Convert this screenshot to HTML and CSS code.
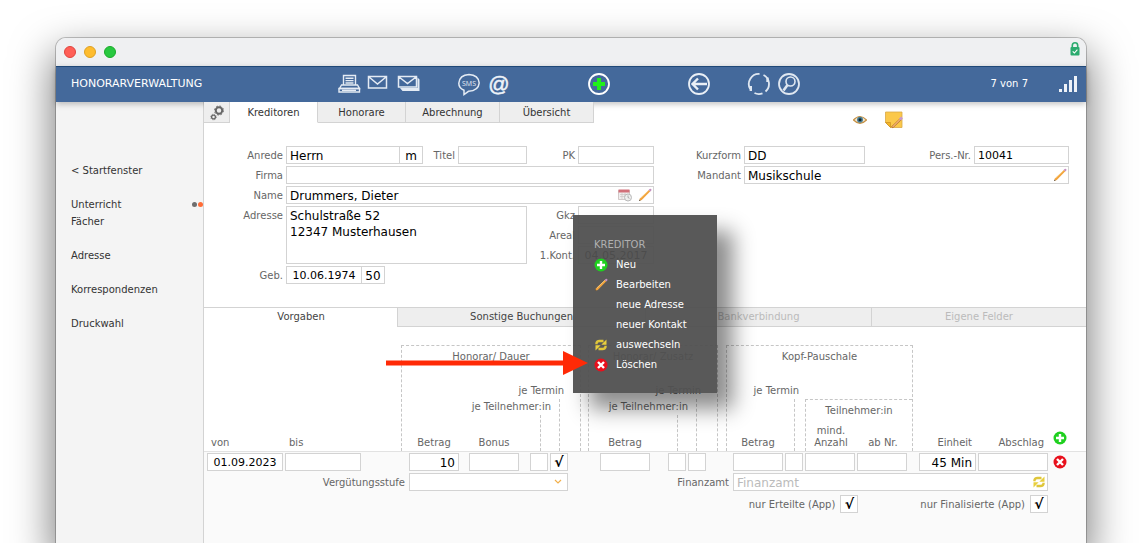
FILE: index.html
```html
<!DOCTYPE html>
<html lang="de">
<head>
    <meta charset="UTF-8">
    <meta name="viewport" content="width=device-width, initial-scale=1.0">
    <title>Honorarverwaltung</title>
    <link rel="stylesheet" href="styles.css">
</head>
<body>

<!-- Shared icons -->
<svg class="sprite" aria-hidden="true">
    <symbol id="icon-add" viewBox="0 0 14 14">
        <circle cx="7" cy="7" r="6.5" fill="#1fd01f"/>
        <path d="M7 3v8M3 7h8" stroke="#fff" stroke-width="2.4"/>
    </symbol>
    <symbol id="icon-delete" viewBox="0 0 14 14">
        <circle cx="7" cy="7" r="6.5" fill="#e8101c"/>
        <path d="M4 4l6 6M10 4l-6 6" stroke="#fff" stroke-width="2.4"/>
    </symbol>
    <symbol id="icon-pencil" viewBox="0 0 14 14">
        <path d="M1 13l1.2-2.8L10.9 1.900l1.400 1.400L3.800 12z" fill="#f2a33c"/>
        <path d="M2.800 10L11 2.200" stroke="#f9cd80" stroke-width=".8"/>
        <path d="M10.600 2l1-1.100q.8-.5 1.500.2t.2 1.500l-1 1z" fill="#c58fc0"/>
        <path d="M1 13l.6-1.600 1 1z" fill="#444"/>
    </symbol>
    <symbol id="icon-swap" viewBox="0 0 14 14">
        <path d="M2.500 6.200V5Q3 3 5.500 3h4" fill="none" stroke="#dfc63a" stroke-width="2.400"/>
        <path d="M12.500 1.500v5.200H7.300z" fill="#e8cf3e"/>
        <path d="M11.500 7.800V9Q11 11 8.500 11h-4" fill="none" stroke="#dfc63a" stroke-width="2.400"/>
        <path d="M1.500 12.500V7.300h5.200z" fill="#e8cf3e"/>
    </symbol>
</svg>

<div class="window">
    <div class="titlebar">
        <span class="dot dot-red"></span>
        <span class="dot dot-yellow"></span>
        <span class="dot dot-green"></span>
        <svg class="lock" width="10" height="14" viewBox="0 0 10 14">
            <path d="M2.300 6V3.500a2.700 2.700 0 0 1 5.400 0V6" fill="none" stroke="#2bab6f" stroke-width="1.600"/>
            <rect x="0.500" y="5" width="9" height="8.500" rx="1" fill="#2bab6f"/>
            <path d="M2.700 9.300l1.700 1.700 3-3.300" fill="none" stroke="#fff" stroke-width="1.100"/>
        </svg>
    </div>

    <header class="header">
        <h1 class="app-title">HONORARVERWALTUNG</h1>
        <div class="tools">
            <button type="button" class="tool" aria-label="Drucken">
                <svg width="24" height="24" viewBox="0 0 24 24" fill="none" stroke="#e4ebf4" stroke-width="1.400">
                    <path d="M6.500 13V3.500h12V13M8.500 6.200h8M8.500 8.600h8M8.500 11h8M4.500 13l-2 3.500h20L20.500 13z"/>
                    <path d="M2 16.500h20.500V20H2z"/>
                    <path d="M5 18.300h14"/>
                </svg>
            </button>
            <button type="button" class="tool" aria-label="E-Mail">
                <svg width="24" height="24" viewBox="0 0 24 24" fill="none" stroke="#e4ebf4" stroke-width="1.500">
                    <path d="M1.500 4.500h18V16h-18zM2 5l8.500 7L19 5"/>
                </svg>
            </button>
            <button type="button" class="tool" aria-label="Serien-E-Mail">
                <svg width="24" height="24" viewBox="0 0 24 24" fill="none" stroke="#e4ebf4" stroke-width="1.500">
                    <path d="M1.500 4.500h18V15h-18zM2 5l8.500 6.500L19 5"/>
                    <path d="M3 16h17.500V5.500l2 2V19H5.500z" fill="#e4ebf4" stroke="none"/>
                </svg>
            </button>
        </div>
        <div class="tools tools-near">
            <button type="button" class="tool" aria-label="SMS">
                <svg width="24" height="24" viewBox="0 0 24 24" fill="none" stroke="#e4ebf4" stroke-width="1.500">
                    <path d="M7 18.200Q1.800 16 1.800 11.200 2.500 3 12 2.500 21.500 3 22.200 11 21.500 18.800 11.500 19.300L7 22.500z"/>
                    <text x="12" y="13.500" class="sms-text">SMS</text>
                </svg>
            </button>
            <button type="button" class="tool" aria-label="Adresse">
                <svg width="24" height="24" viewBox="0 0 24 24"><text x="12" y="18.500" class="at-text">@</text></svg>
            </button>
        </div>
        <div class="tools tools-far">
            <button type="button" class="tool" aria-label="Neu">
                <svg width="24" height="24" viewBox="0 0 24 24">
                    <circle cx="12" cy="12" r="10" fill="none" stroke="#fff" stroke-width="1.800"/>
                    <path d="M12 6v12M6 12h12" stroke="#1ff01a" stroke-width="4"/>
                </svg>
            </button>
        </div>
        <div class="tools tools-far">
            <button type="button" class="tool" aria-label="Zurück">
                <svg width="24" height="24" viewBox="0 0 24 24" fill="none" stroke="#e9eff6">
                    <circle cx="12" cy="12" r="10" stroke-width="1.800"/>
                    <path d="M20 12H6M11 6.500L5.500 12l5.500 5.500" stroke-width="2.400"/>
                </svg>
            </button>
        </div>
        <div class="tools tools-near">
            <button type="button" class="tool" aria-label="Aktualisieren">
                <svg width="24" height="24" viewBox="0 0 24 24" fill="none" stroke="#dfe7f1" stroke-width="1.800">
                    <path d="M16.500 3A10 10 0 0 1 18.500 19.500M15.500 21.300A10 10 0 0 1 7.500 21M3.200 17A10 10 0 0 1 12.500 2"/>
                    <path d="M20.500 5.500v4.500M3.800 14v5" stroke-width="2.400"/>
                </svg>
            </button>
            <button type="button" class="tool" aria-label="Suchen">
                <svg width="24" height="24" viewBox="0 0 24 24" fill="none" stroke="#dfe7f1">
                    <circle cx="12" cy="12" r="10" stroke-width="1.800"/>
                    <circle cx="13.500" cy="9.500" r="4.500" stroke-width="1.600"/>
                    <path d="M10.500 13l-4 5.500" stroke-width="2.600"/>
                </svg>
            </button>
        </div>
        <span class="counter">7 von 7</span>
        <svg width="20" height="18" viewBox="0 0 20 18" fill="#eef2f8">
            <path d="M1 14h3v3H1zM6 9h3v8H6zM11 5h3v12h-3zM16 1h3v16h-3z"/>
        </svg>
    </header>

    <div class="content">
        <nav class="sidebar">
            <a href="#start">&lt; Startfenster</a>
            <div class="nav-group">
                <a href="#unterricht">Unterricht <span class="marks"><i class="mark"></i><i class="mark mark-orange"></i></span></a>
                <a href="#faecher">Fächer</a>
            </div>
            <a href="#adresse">Adresse</a>
            <a href="#korrespondenzen">Korrespondenzen</a>
            <a href="#druckwahl">Druckwahl</a>
        </nav>

        <main class="main">
            <div class="top-row">
                <div class="tabs">
                    <button type="button" class="tab tab-gear" aria-label="Einstellungen">
                        <svg width="16" height="16" viewBox="0 0 16 16" fill="none" stroke="#666">
                            <circle cx="10" cy="5.500" r="3.200" stroke-width="1.900"/>
                            <circle cx="10" cy="5.500" r="4.500" stroke-width="1" stroke-dasharray="1.800 1.730"/>
                            <circle cx="4.500" cy="12" r="1.900" stroke-width="1.300"/>
                            <circle cx="4.500" cy="12" r="2.800" stroke-width=".8" stroke-dasharray="1.100 1.100"/>
                        </svg>
                    </button>
                    <button type="button" class="tab tab-active">Kreditoren</button>
                    <button type="button" class="tab">Honorare</button>
                    <button type="button" class="tab tab-wide">Abrechnung</button>
                    <button type="button" class="tab tab-wide">Übersicht</button>
                </div>
                <div class="quick">
                    <button type="button" class="icon-button" aria-label="Ansicht">
                        <svg width="14" height="10" viewBox="0 0 14 10">
                            <path d="M.5 5Q7-2 13.500 5 7 11.500.5 5z" fill="#f0e7d4" stroke="#c69042" stroke-width="1.200"/>
                            <circle cx="7" cy="4.800" r="3" fill="#4b7f95"/>
                            <circle cx="7" cy="4.800" r="1.500" fill="#10242e"/>
                        </svg>
                    </button>
                    <button type="button" class="icon-button" aria-label="Notiz">
                        <svg width="18" height="18" viewBox="0 0 18 18">
                            <path d="M.5 1h16.500v15.500H5.500L.5 11.500z" fill="#fbc84a" stroke="#d9a847" stroke-width=".8"/>
                            <path d="M.5 11.500l5 5v-5z" fill="#f4b52b" stroke="#c58a1d" stroke-width=".6"/>
                            <path d="M7 16.500L15.800 8" stroke="#ad6a2a" stroke-width="2.400"/>
                            <path d="M7.500 16L15.600 8" stroke="#f2b070" stroke-width="1.400"/>
                            <path d="M15 8.500L17 6.500" stroke="#c69ad2" stroke-width="2.600"/>
                        </svg>
                    </button>
                </div>
            </div>

            <form class="person">
                <div class="person-left">
                    <label for="anrede">Anrede</label>
                    <div class="joined">
                        <input type="text" id="anrede" class="field field-salutation" value="Herrn">
                        <input type="text" class="field field-short" value="m" aria-label="Geschlecht">
                        <label for="titel" class="label-inner">Titel</label>
                        <input type="text" id="titel" class="field field-title">
                    </div>
                    <label for="pk">PK</label>
                    <input type="text" id="pk" class="field">

                    <label for="firma">Firma</label>
                    <input type="text" id="firma" class="field span-3">

                    <label for="name">Name</label>
                    <div class="field field-box span-3">
                        <input type="text" id="name" class="bare" value="Drummers, Dieter">
                        <button type="button" class="icon-button" aria-label="Termin">
                            <svg width="14" height="14" viewBox="0 0 14 14">
                                <path d="M.5 2.500h11v9H.5z" fill="#f0eeee" stroke="#c8bcbc" stroke-width=".8"/>
                                <path d="M.5 1.500h11v3H.5z" fill="#d2707a"/>
                                <path d="M2 6.500h8M2 8.500h5M4 5v6M7 5v4" stroke="#cdc6c6" stroke-width=".7"/>
                                <circle cx="10" cy="9.500" r="3.500" fill="#eee" stroke="#b9b9b9"/>
                                <path d="M10 7.500v2l1.500.8" fill="none" stroke="#999" stroke-width=".8"/>
                            </svg>
                        </button>
                        <button type="button" class="icon-button" aria-label="Name bearbeiten"><svg width="14" height="14"><use href="#icon-pencil"/></svg></button>
                    </div>

                    <label for="adresse">Adresse</label>
                    <textarea id="adresse" class="field field-address">Schulstraße 52
12347 Musterhausen</textarea>
                    <label for="gkz" class="label-second">Gkz</label>
                    <input type="text" id="gkz" class="field">
                    <label for="areal" class="label-second">Areal</label>
                    <input type="text" id="areal" class="field">
                    <label for="kontakt" class="label-second">1.Kont.</label>
                    <input type="text" id="kontakt" class="field field-date" value="04.05.2017">

                    <label for="geb">Geb.</label>
                    <div class="joined">
                        <input type="text" id="geb" class="field field-date" value="10.06.1974">
                        <input type="text" class="field field-short" value="50" aria-label="Alter">
                    </div>
                </div>

                <div class="person-right">
                    <label for="kurzform">Kurzform</label>
                    <div class="split">
                        <input type="text" id="kurzform" class="field field-code" value="DD">
                        <label for="persnr">Pers.-Nr.</label>
                        <input type="text" id="persnr" class="field field-number" value="10041">
                    </div>
                    <label for="mandant">Mandant</label>
                    <div class="field field-box">
                        <input type="text" id="mandant" class="bare" value="Musikschule">
                        <button type="button" class="icon-button" aria-label="Mandant bearbeiten"><svg width="14" height="14"><use href="#icon-pencil"/></svg></button>
                    </div>
                </div>
            </form>

            <div class="subtabs">
                <button type="button" class="subtab subtab-active">Vorgaben</button>
                <button type="button" class="subtab subtab-bookings">Sonstige Buchungen</button>
                <button type="button" class="subtab subtab-bank" disabled>Bankverbindung</button>
                <button type="button" class="subtab subtab-own" disabled>Eigene Felder</button>
            </div>

            <form class="rates">
                <div class="rate-head">
                    <div class="head-dates">
                        <label for="von">von</label>
                        <label for="bis">bis</label>
                    </div>
                    <div class="group group-duration">
                        <div class="group-title">Honorar/ Dauer</div>
                        <div class="per-session">je Termin</div>
                        <div class="session-line">
                            <div class="per-person">je Teilnehmer:in</div>
                            <div class="person-line">
                                <label for="betrag1">Betrag</label>
                                <label for="bonus">Bonus</label>
                            </div>
                        </div>
                    </div>
                    <div class="group group-extra">
                        <div class="group-title">Honorar/ Zusatz</div>
                        <div class="per-session">je Termin</div>
                        <div class="session-line">
                            <div class="per-person">je Teilnehmer:in</div>
                            <div class="person-line">
                                <label for="betrag2">Betrag</label>
                            </div>
                        </div>
                    </div>
                    <div class="group group-flat">
                        <div class="group-title">Kopf-Pauschale</div>
                        <div class="per-session">je Termin</div>
                        <div class="flat-cells">
                            <div class="flat-session"><label for="betrag3">Betrag</label></div>
                            <div class="flat-person">
                                <div class="flat-title">Teilnehmer:in</div>
                                <div class="flat-labels">
                                    <label for="anzahl">mind.<br>Anzahl</label>
                                    <label for="abnr">ab Nr.</label>
                                </div>
                            </div>
                        </div>
                    </div>
                    <div class="head-unit">
                        <label for="einheit" class="col-unit">Einheit</label>
                        <label for="abschlag" class="col-discount">Abschlag</label>
                        <button type="button" class="icon-button" aria-label="Zeile hinzufügen"><svg width="14" height="14"><use href="#icon-add"/></svg></button>
                    </div>
                </div>

                <div class="rate-body">
                    <div class="rate-row">
                        <div class="cells cells-dates">
                            <input type="text" id="von" class="field field-date" value="01.09.2023">
                            <input type="text" id="bis" class="field field-date">
                        </div>
                        <div class="cells cells-duration">
                            <input type="text" id="betrag1" class="field field-amount" value="10">
                            <input type="text" id="bonus" class="field field-amount">
                            <input type="checkbox" class="check check-first" aria-label="Honorar je Teilnehmer:in">
                            <input type="checkbox" class="check" aria-label="Honorar je Termin" checked>
                        </div>
                        <div class="cells cells-extra">
                            <input type="text" id="betrag2" class="field field-amount">
                            <input type="checkbox" class="check check-first" aria-label="Zusatz je Teilnehmer:in">
                            <input type="checkbox" class="check" aria-label="Zusatz je Termin">
                        </div>
                        <div class="cells cells-flat">
                            <input type="text" id="betrag3" class="field field-amount">
                            <input type="checkbox" class="check" aria-label="Pauschale je Termin">
                            <input type="text" id="anzahl" class="field field-amount">
                            <input type="text" id="abnr" class="field field-amount">
                        </div>
                        <div class="cells cells-unit">
                            <input type="text" id="einheit" class="field field-amount col-unit" value="45 Min">
                            <input type="text" id="abschlag" class="field col-discount">
                            <button type="button" class="icon-button" aria-label="Zeile löschen"><svg width="14" height="14"><use href="#icon-delete"/></svg></button>
                        </div>
                    </div>

                    <div class="extra-row">
                        <label for="stufe" class="label-level">Vergütungsstufe</label>
                        <select id="stufe" class="field field-select"><option></option></select>
                        <label for="finanzamt" class="label-office">Finanzamt</label>
                        <div class="field field-box field-office">
                            <input type="text" id="finanzamt" class="bare" placeholder="Finanzamt">
                            <button type="button" class="icon-button" aria-label="Finanzamt wechseln"><svg width="14" height="14"><use href="#icon-swap"/></svg></button>
                        </div>
                    </div>

                    <div class="app-row">
                        <label>nur Erteilte (App) <input type="checkbox" class="check" checked></label>
                        <label>nur Finalisierte (App) <input type="checkbox" class="check" checked></label>
                    </div>
                </div>
            </form>

            <div class="menu">
                <div class="menu-title">KREDITOR</div>
                <button type="button" class="menu-item"><svg width="14" height="14"><use href="#icon-add"/></svg>Neu</button>
                <button type="button" class="menu-item"><svg width="14" height="14"><use href="#icon-pencil"/></svg>Bearbeiten</button>
                <button type="button" class="menu-item menu-plain">neue Adresse</button>
                <button type="button" class="menu-item menu-plain">neuer Kontakt</button>
                <button type="button" class="menu-item"><svg width="14" height="14"><use href="#icon-swap"/></svg>auswechseln</button>
                <button type="button" class="menu-item"><svg width="14" height="14"><use href="#icon-delete"/></svg>Löschen</button>
            </div>

            <svg class="arrow" width="204" height="26" viewBox="0 0 204 26">
                <path d="M0 10.500h177V1l25 12-25 12v-9.500H0z" fill="#ff2a06"/>
            </svg>
        </main>
    </div>
</div>

</body>
</html>
```
FILE: styles.css
```css
* {
    box-sizing: border-box;
}

body {
    margin: 0;
    height: 100vh;
    padding: 38px 56px 0;
    overflow: hidden;
    background: #fff;
    font-family: Verdana, "DejaVu Sans", sans-serif;
    font-size: 10px;
    line-height: 16px;
    color: #666;
}

button, input, select, textarea {
    font: inherit;
    color: inherit;
    margin: 0;
}

button {
    padding: 0;
    border: none;
    background: none;
    cursor: pointer;
}

svg {
    display: block;
    flex: none;
}

.sprite {
    position: absolute;
    width: 0;
    height: 0;
}

/* Window frame */
.window {
    display: flex;
    flex-direction: column;
    min-height: 100%;
    border-radius: 10px 10px 0 0;
    background: #fff;
    box-shadow: 0 0 0 1px rgba(0, 0, 0, 0.22), 0 18px 40px 4px rgba(0, 0, 0, 0.5);
}

.titlebar {
    display: flex;
    align-items: center;
    gap: 8px;
    height: 28px;
    padding: 0 6px 0 8px;
    border-radius: 10px 10px 0 0;
    background: #eff0f2;
}

.dot {
    width: 12px;
    height: 12px;
    border-radius: 50%;
    border: 1px solid #e0443e;
    background: #ff5f57;
}

.dot-yellow {
    border-color: #dea123;
    background: #febc2e;
}

.dot-green {
    border-color: #1aab29;
    background: #28c840;
}

.lock {
    margin: 0 0 6px auto;
}

/* Blue toolbar */
.header {
    position: relative;
    display: flex;
    align-items: center;
    height: 36px;
    padding: 0 8px 2px 15px;
    border-top: 1px solid #1f4878;
    background: #44699b;
    color: #fff;
    box-shadow: 0 2px 6px rgba(0, 0, 0, 0.25);
}

.app-title {
    width: 266px;
    margin: 0;
    font-size: 11px;
    font-weight: normal;
}

.tools {
    display: flex;
    gap: 6px;
}

.tools-near {
    margin-left: 36px;
}

.tools-far {
    margin-left: 76px;
}

.sms-text {
    font-family: "Open Sans", sans-serif;
    font-size: 7px;
    text-anchor: middle;
    fill: #e4ebf4;
    stroke: none;
}

.at-text {
    font-family: "Liberation Sans", Arial, sans-serif;
    font-size: 21px;
    text-anchor: middle;
    fill: #eef3f9;
    stroke: #eef3f9;
    stroke-width: 0.5px;
}

.counter {
    margin: 0 30px 0 auto;
}

.content {
    display: flex;
    flex: 1;
}

/* Left navigation */
.sidebar {
    display: flex;
    flex-direction: column;
    gap: 17px;
    width: 148px;
    padding: 60px 0 0 15px;
    border-right: 1px solid #d3d3d3;
    background: #f4f4f4;
    line-height: 17px;
}

.sidebar a {
    display: flex;
    justify-content: space-between;
    align-items: center;
    color: #333;
    text-decoration: none;
}

.marks {
    display: flex;
    gap: 1px;
}

.mark {
    width: 5px;
    height: 5px;
    border-radius: 50%;
    background: #6e6e6e;
}

.mark-orange {
    background: #ff6c37;
}

.main {
    position: relative;
    display: flex;
    flex-direction: column;
    flex: 1;
}

/* Upper tabs */
.top-row {
    display: flex;
    height: 44px;
}

.tabs {
    display: flex;
    height: 21px;
}

.tab {
    width: 88px;
    padding-top: 1px;
    border: solid #d3d3d3;
    border-width: 0 1px 1px 0;
    background: #eee;
    color: #333;
}

.tab-gear {
    display: flex;
    align-items: center;
    justify-content: center;
    width: 26px;
}

.tab-active {
    border-bottom-color: #fff;
    background: #fff;
}

.tab-wide {
    width: 94px;
}

.quick {
    display: flex;
    gap: 18px;
    align-items: center;
    margin: 0 183px 8px auto;
}

.icon-button {
    flex: none;
}

/* Person data */
.person {
    display: flex;
    height: 161px;
}

.person-left {
    display: grid;
    grid-template-columns: 79px 241px 45px 76px;
    grid-auto-rows: 18px;
    gap: 2px 3px;
}

.person-right {
    display: grid;
    flex: 1;
    grid-template-columns: 87px 1fr;
    grid-auto-rows: 18px;
    gap: 2px 3px;
    padding-right: 17px;
}

.person label {
    text-align: right;
    line-height: 20px;
}

.label-second {
    grid-column: 3;
}

.field {
    width: 100%;
    min-width: 0;
    height: 18px;
    padding: 1px 3px 0;
    border: 1px solid #d3d3d3;
    border-radius: 0;
    outline: none;
    background: #fff;
    font-size: 12px;
    color: #000;
}

.field-box {
    display: flex;
    align-items: center;
    gap: 6px;
    padding: 0 1px 0 3px;
}

.bare {
    flex: 1;
    min-width: 0;
    height: 16px;
    padding: 1px 0 0;
    border: none;
    outline: none;
    background: none;
}

.bare::placeholder {
    color: #bbb;
    opacity: 1;
}

.joined, .split {
    display: flex;
    min-width: 0;
}

.joined .field + .field {
    margin-left: -1px;
}

.split {
    gap: 3px;
}

.split label {
    margin-left: auto;
}

.span-3 {
    grid-column: span 3;
}

.field-salutation {
    width: 114px;
}

.field-short {
    width: 24px;
    padding: 1px 0 0;
    text-align: center;
}

.label-inner {
    flex: 1;
    padding-right: 3px;
}

.field-title {
    width: 69px;
}

.field-date {
    width: 76px;
    padding: 1px 0 0;
    font-size: 11px;
    text-align: center;
}

.field-code {
    width: 121px;
}

.field-number {
    width: 95px;
    font-size: 11px;
}

.field-address {
    grid-row: span 3;
    height: 58px;
    resize: none;
}

/* Lower tabs */
.subtabs {
    display: flex;
    height: 20px;
    border-top: 1px solid #d3d3d3;
}

.subtab {
    flex: 248;
    border: solid #d3d3d3;
    border-width: 0 0 1px 1px;
    background: #eee;
    color: #444;
}

.subtab-active {
    flex: 193;
    border-color: #fff;
    background: #fff;
}

.subtab-bank {
    flex: 226;
    color: #bbb;
}

.subtab-own {
    flex: 215;
    color: #bbb;
}

/* Rates */
.rates {
    display: flex;
    flex-direction: column;
    flex: 1;
}

.rate-head, .rate-row {
    display: grid;
    grid-template-columns: 197px 180px 7px 130px 8px 187px 1fr;
}

.rate-head {
    padding-top: 18px;
}

.head-dates {
    display: flex;
    align-items: flex-end;
    padding-left: 7px;
}

.head-dates label {
    width: 78px;
}

.group {
    height: 106px;
    padding-top: 3px;
    border: 1px dashed #c6c6c6;
    border-bottom: none;
}

.group-extra, .cells-extra {
    grid-column: 4;
}

.group-flat, .cells-flat {
    grid-column: 6;
}

.group-title {
    text-align: center;
}

.per-session {
    margin-top: 17px;
    padding-right: 16px;
    line-height: 17px;
    text-align: right;
}

.session-line {
    height: 52px;
    margin-right: 20px;
    border-right: 1px dashed #c6c6c6;
}

.per-person {
    height: 16px;
    padding-right: 8px;
    text-align: right;
    white-space: nowrap;
}

.person-line {
    display: flex;
    gap: 10px;
    align-items: flex-end;
    height: 36px;
    margin-right: 18px;
    padding-left: 7px;
    border-right: 1px dashed #c6c6c6;
}

.person-line label {
    width: 50px;
    text-align: center;
}

.group-extra .person-line {
    padding-left: 11px;
}

.group-flat .per-session {
    padding-right: 113px;
}

.flat-cells {
    display: flex;
    gap: 10px;
    height: 52px;
}

.flat-session {
    display: flex;
    align-items: flex-end;
    width: 68px;
    padding-left: 6px;
    border-right: 1px dashed #c6c6c6;
}

.flat-session label {
    width: 50px;
    text-align: center;
}

.flat-person {
    flex: 1;
    display: flex;
    flex-direction: column;
    justify-content: space-between;
    padding: 3px 0 2px;
    border: dashed #c6c6c6;
    border-width: 1px 0 0 1px;
    text-align: center;
    line-height: 12px;
}

.flat-title {
    line-height: 16px;
}

.flat-labels {
    display: flex;
    gap: 2px;
    align-items: flex-end;
}

.flat-labels label {
    width: 50px;
}

.head-unit {
    grid-column: 7;
    display: flex;
    align-items: flex-end;
    gap: 2px;
    padding: 0 19px 0 6px;
    text-align: right;
}

.head-unit label {
    padding-right: 4px;
}

.head-unit .icon-button {
    margin: 0 0 6px 3px;
}

.col-unit {
    flex: none;
    width: 57px;
}

.col-discount {
    flex: 1;
    min-width: 0;
}

.rate-body {
    flex: 1;
    display: flex;
    flex-direction: column;
    gap: 2px;
    padding-top: 1px;
    border-top: 1px solid #e2e2e2;
    background: #fafafa;
}

.cells {
    display: flex;
    gap: 2px;
}

.cells-dates {
    padding-left: 3px;
}

.cells-duration {
    padding-left: 8px;
}

.cells-duration .field + .field {
    margin-left: 8px;
}

.cells-duration .check-first {
    margin-left: 9px;
}

.cells-extra {
    padding-left: 12px;
}

.cells-extra .check-first {
    margin-left: 16px;
}

.cells-flat {
    padding-left: 7px;
}

.cells-unit {
    grid-column: 7;
    padding: 0 19px 0 6px;
}

.cells-unit .icon-button {
    margin-left: 3px;
}

.field-amount {
    width: 50px;
    text-align: right;
}

.cells-unit .col-unit {
    width: 57px;
}

.check {
    flex: none;
    appearance: none;
    width: 18px;
    height: 18px;
    border: 1px solid #d3d3d3;
    background: #fff;
    color: #000;
}

.check:checked::before {
    content: "√";
    display: block;
    font-size: 14px;
    font-weight: bold;
    line-height: 17px;
    text-align: center;
}

.extra-row {
    display: flex;
    gap: 4px;
    padding-right: 38px;
}

.extra-row label {
    line-height: 20px;
    text-align: right;
}

.label-level {
    width: 201px;
}

.field-select {
    width: 159px;
    appearance: none;
    background: #fff url("data:image/svg+xml,%3Csvg xmlns='http://www.w3.org/2000/svg' width='8' height='5'%3E%3Cpath d='M1 1l3 3 3-3' fill='none' stroke='%23f2b04c' stroke-width='1.2'/%3E%3C/svg%3E") no-repeat right 5px top 5px;
}

.label-office {
    width: 157px;
}

.field-office {
    flex: 1;
}

.app-row {
    display: flex;
    justify-content: flex-end;
    gap: 62px;
    padding-right: 38px;
}

.app-row label {
    display: flex;
    gap: 5px;
    height: 18px;
    line-height: 20px;
}

/* Context menu over the form */
.menu {
    position: absolute;
    left: 369px;
    top: 113px;
    width: 144px;
    padding: 20px 21px 18px;
    background: rgba(80, 80, 80, 0.95);
    box-shadow: 16px 16px 20px rgba(0, 0, 0, 0.45);
    line-height: 20px;
    color: #fff;
}

.menu-title {
    color: #b0b0b0;
}

.menu-item {
    display: flex;
    align-items: center;
    gap: 8px;
    width: 100%;
    height: 20px;
    white-space: nowrap;
}

.menu-plain {
    padding-left: 22px;
}

.arrow {
    position: absolute;
    left: 182px;
    top: 248px;
}
```
